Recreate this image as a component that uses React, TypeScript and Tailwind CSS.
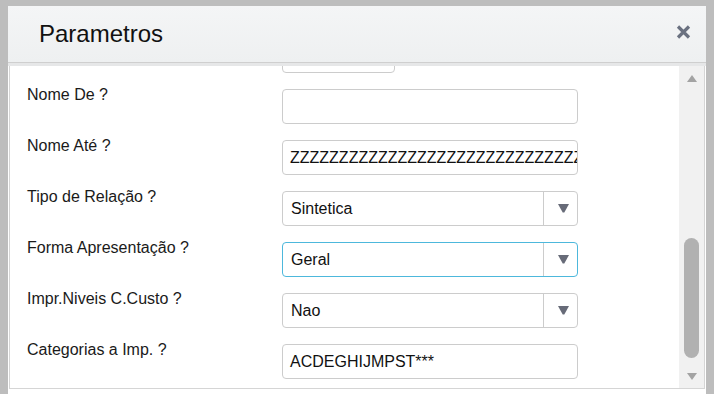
import React from "react";

type Field = {
  label: string;
  value: string;
  kind: "text" | "select";
  focused?: boolean;
};

const fields: Field[] = [
  { label: "Nome De ?", value: "", kind: "text" },
  { label: "Nome Até ?", value: "Z".repeat(30), kind: "text" },
  { label: "Tipo de Relação ?", value: "Sintetica", kind: "select" },
  { label: "Forma Apresentação ?", value: "Geral", kind: "select", focused: true },
  { label: "Impr.Niveis C.Custo ?", value: "Nao", kind: "select" },
  { label: "Categorias a Imp. ?", value: "ACDEGHIJMPST***", kind: "text" },
];

const CaretDown = () => (
  <svg width="11" height="9" viewBox="0 0 11 9">
    <polygon points="0,0 11,0 6.3,8.5 4.7,8.5" fill="#676b78" />
  </svg>
);

const FieldBox = ({ field }: { field: Field }) => {
  const border = field.focused ? "border-[#4db8dc]" : "border-[#cccccc]";
  if (field.kind === "select") {
    return (
      <div className={`flex h-[35px] w-[296px] rounded-[4px] border bg-white ${border}`}>
        <div className="flex flex-1 items-center overflow-hidden whitespace-nowrap pl-[8px] text-[16px] leading-[18px] text-[#111]">
          {field.value}
        </div>
        <div className="flex w-[34px] items-center justify-center border-l border-[#cccccc] pl-[5px] pb-[1px]">
          <CaretDown />
        </div>
      </div>
    );
  }
  return (
    <div
      className={`flex h-[35px] w-[296px] items-center overflow-hidden whitespace-nowrap rounded-[4px] border bg-white pl-[7px] text-[16px] leading-[18px] text-[#111] ${border}`}
    >
      {field.value}
    </div>
  );
};

export default function App() {
  return (
    <div className="h-[394px] w-[714px] overflow-hidden bg-[#bdbdbd] pt-[6px] pl-[8px] font-['Liberation_Sans',Arial,sans-serif]">
      <div className="flex h-[400px] w-[698px] flex-col bg-white">
        {/* header */}
        <div className="flex h-[57px] items-center justify-between border-b border-[#cfcfcf] bg-gradient-to-b from-[#f4f5f6] to-[#eef0f1] pl-[31px] pr-[15px]">
          <span className="text-[24px] leading-[28px] text-[#111]">Parametros</span>
          <svg width="15" height="14" viewBox="0 0 15 14" className="mt-[-4px]">
            <path d="M2 1.5 L13 12.5 M13 1.5 L2 12.5" stroke="#6a7180" strokeWidth="3.2" />
          </svg>
        </div>
        <div className="h-[3px] bg-[#e6e7e8]" />

        {/* body */}
        <div className="mx-[1px] flex h-[323px] border border-t-0 border-[#d5d5d5]">
          <div className="flex-1 overflow-hidden">
            <div className="-mt-[28px] flex flex-col">
              <div className="flex h-[51px]">
                <div className="w-[272px]" />
                <div className="h-[35px] w-[113px] rounded-[4px] border border-[#cccccc]" />
              </div>
              {fields.map((f) => (
                <div key={f.label} className="flex h-[51px]">
                  <div className="-mt-[3px] w-[272px] pl-[17px] text-[16px] leading-[18px] text-[#1a1a1a]">
                    {f.label}
                  </div>
                  <FieldBox field={f} />
                </div>
              ))}
            </div>
          </div>

          {/* scrollbar */}
          <div className="flex w-[25px] flex-col items-center bg-[#f1f1f1] pt-[9px] pb-[8px]">
            <svg width="10" height="7" viewBox="0 0 10 7">
              <polygon points="5,0 10,7 0,7" fill="#a3a3a3" />
            </svg>
            <div className="flex-1 pt-[156px] pb-[9px]">
              <div className="h-[120px] w-[15px] rounded-full bg-[#b1b1b1]" />
            </div>
            <svg width="10" height="7" viewBox="0 0 10 7">
              <polygon points="0,0 10,0 5,7" fill="#a3a3a3" />
            </svg>
          </div>
        </div>
      </div>
    </div>
  );
}
